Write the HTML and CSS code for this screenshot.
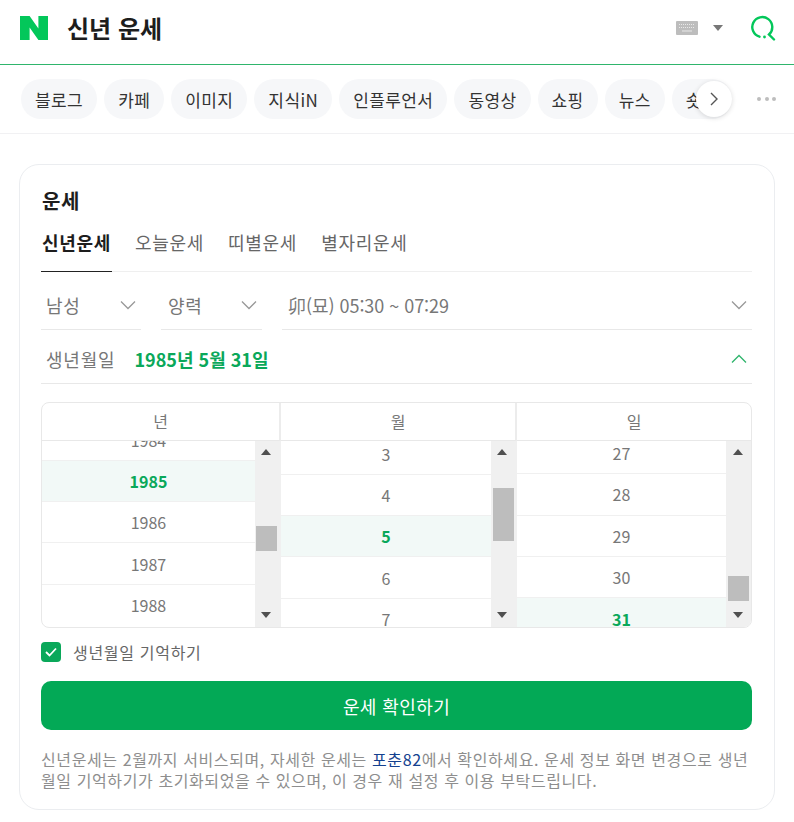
FILE: index.html
```html
<!DOCTYPE html>
<html lang="ko">
<head>
<meta charset="utf-8">
<title>신년 운세</title>
<link rel="stylesheet" href="styles.css">
</head>
<body>
<header class="top">
  <svg class="logo" width="28" height="24" viewBox="0 0 28 24"><path fill="#03c75a" d="M0 0h9.600l8.800 12.600V0H28v24h-9.600L9.600 11.400V24H0z"/></svg>
  <h1 class="title">신년 운세</h1>
  <div class="top-tools">
    <svg class="kbd" width="22" height="14" viewBox="0 0 22 14"><rect width="22" height="14" rx="1" fill="#bdbdbd"/><path stroke="#e8e8e8" stroke-width="1" stroke-dasharray="1 1" d="M3 3.500h16M3 6.500h16"/><path stroke="#e8e8e8" d="M6 10h10"/></svg>
    <span class="caret"></span>
    <svg class="search" width="26" height="26" viewBox="0 0 26 26" fill="none"><path stroke="#03c75a" stroke-width="2.400" stroke-linecap="round" d="M9.500 21.700A10 10 0 1 1 19 19.500L24 24.500"/><circle cx="14.500" cy="22" r="1.400" fill="#03c75a"/></svg>
  </div>
</header>
<nav class="tabs-bar">
  <div class="chips">
    <a class="chip">블로그</a><a class="chip">카페</a><a class="chip">이미지</a><a class="chip">지식iN</a><a class="chip">인플루언서</a><a class="chip">동영상</a><a class="chip">쇼핑</a><a class="chip">뉴스</a><a class="chip">숏폼</a>
  </div>
  <button class="next" aria-label="다음"><svg width="10" height="14" viewBox="0 0 10 14" fill="none"><path stroke="#555" stroke-width="1.400" d="M2 1l6 6-6 6"/></svg></button>
  <div class="more"><i></i><i></i><i></i></div>
</nav>
<main class="card">
  <h2 class="card-title">운세</h2>
  <div class="tabs">
    <a class="tab on">신년운세</a><a class="tab">오늘운세</a><a class="tab">띠별운세</a><a class="tab">별자리운세</a>
  </div>
  <div class="selects">
    <div class="sel sel-a"><span>남성</span><svg class="chev" width="16" height="10" viewBox="0 0 16 10" fill="none"><path d="M1 1.500l7 7 7-7"/></svg></div>
    <div class="sel sel-b"><span>양력</span><svg class="chev" width="16" height="10" viewBox="0 0 16 10" fill="none"><path d="M1 1.500l7 7 7-7"/></svg></div>
    <div class="sel sel-c"><span>卯(묘) 05:30 ~ 07:29</span><svg class="chev" width="16" height="10" viewBox="0 0 16 10" fill="none"><path d="M1 1.500l7 7 7-7"/></svg></div>
  </div>
  <div class="birth">
    <span class="birth-label">생년월일</span>
    <strong class="birth-val">1985년 5월 31일</strong>
    <svg class="chev up" width="16" height="10" viewBox="0 0 16 10" fill="none"><path d="M1 8.500l7-7 7 7"/></svg>
  </div>
  <div class="picker">
    <section class="col col-y">
      <div class="col-head">년</div>
      <div class="col-body">
        <ul class="list">
          <li>1984</li><li class="cur">1985</li><li>1986</li><li>1987</li><li>1988</li>
        </ul>
        <div class="bar"><span class="ar-up"></span><span class="thumb"></span><span class="ar-down"></span></div>
      </div>
    </section>
    <section class="col col-m">
      <div class="col-head">월</div>
      <div class="col-body">
        <ul class="list">
          <li>3</li><li>4</li><li class="cur">5</li><li>6</li><li>7</li>
        </ul>
        <div class="bar"><span class="ar-up"></span><span class="thumb"></span><span class="ar-down"></span></div>
      </div>
    </section>
    <section class="col col-d">
      <div class="col-head">일</div>
      <div class="col-body">
        <ul class="list">
          <li>27</li><li>28</li><li>29</li><li>30</li><li class="cur">31</li>
        </ul>
        <div class="bar"><span class="ar-up"></span><span class="thumb"></span><span class="ar-down"></span></div>
      </div>
    </section>
  </div>
  <label class="remember">
    <span class="check"><svg width="14" height="12" viewBox="0 0 14 12" fill="none"><path stroke="#fff" stroke-width="1.800" d="M2 6l3.500 3.500L12 2.500"/></svg></span>
    생년월일 기억하기
  </label>
  <button class="cta">운세 확인하기</button>
  <p class="note">신년운세는 2월까지 서비스되며, 자세한 운세는 <a class="link">포춘82</a>에서 확인하세요. 운세 정보 화면 변경으로 생년월일 기억하기가 초기화되었을 수 있으며, 이 경우 재 설정 후 이용 부탁드립니다.</p>
</main>
</body>
</html>
```
FILE: styles.css
```css
* { box-sizing: border-box; }
html, body { margin: 0; padding: 0; }
body {
  background: #fff;
  color: #222;
  font-family: "Noto Sans CJK KR", "Noto Sans", sans-serif;
  height: 822px;
  overflow: hidden;
}
h1, h2, p, ul { margin: 0; padding: 0; }
ul { list-style: none; }

.top {
  height: 65px;
  display: flex;
  align-items: center;
  padding: 0 18px 8px 20px;
  border-bottom: 1px solid #2fb56c;
}
.title {
  margin-left: 19px;
  font-size: 24px;
  font-weight: 700;
  line-height: 30px;
  color: #1d1d1d;
}
.top-tools { margin-left: auto; display: flex; align-items: center; }
.caret {
  width: 0; height: 0;
  margin-left: 15px;
  border: 5px solid transparent;
  border-top: 6px solid #777;
  border-bottom: 0;
}
.search { margin-left: 27px; }

.tabs-bar {
  position: relative;
  height: 69px;
  display: flex;
  align-items: center;
  padding-left: 21px;
  border-bottom: 1px solid #f1f1f3;
}
.chips {
  width: 711px;
  display: flex;
  gap: 7px;
  overflow: hidden;
}
.chip {
  flex: none;
  height: 40px;
  padding: 0 14px;
  display: flex;
  align-items: center;
  border-radius: 20px;
  background: #f6f7f9;
  font-size: 17px;
  color: #333;
  letter-spacing: 0.4px;
}
.next {
  position: absolute;
  left: 696px;
  top: 16px;
  width: 36px;
  height: 36px;
  padding: 0;
  border: 0;
  border-radius: 50%;
  background: #fff;
  box-shadow: 0 1px 5px rgba(0, 0, 0, .14);
  display: flex;
  align-items: center;
  justify-content: center;
}
.more {
  position: absolute;
  left: 757px;
  top: 32px;
  display: flex;
  gap: 3.500px;
}
.more i { width: 4px; height: 4px; border-radius: 50%; background: #bdbdbd; }

.card {
  margin: 30px 19px 0;
  width: 756px;
  height: 646px;
  padding: 20px 22px 0 21px;
  border: 1px solid #ebedf0;
  border-radius: 20px;
}
.card-title {
  padding-left: 1px;
  font-size: 20px;
  font-weight: 700;
  line-height: 32px;
  letter-spacing: 0.6px;
  color: #1d1d1d;
}
.tabs {
  margin-top: 10px;
  height: 45px;
  display: flex;
  gap: 22px;
  border-bottom: 1px solid #efefef;
}
.tab {
  height: 45px;
  padding: 0 1px;
  font-size: 18px;
  line-height: 30px;
  color: #666;
  letter-spacing: 0.7px;
}
.tab.on {
  font-weight: 700;
  color: #1d1d1d;
  border-bottom: 1px solid #222;
}
.selects { display: flex; gap: 20px; height: 58px; }
.sel {
  height: 58px;
  display: flex;
  align-items: center;
  justify-content: space-between;
  padding: 9px 5px 0 5px;
  border-bottom: 1px solid #e8e8e8;
  font-size: 18px;
  letter-spacing: 0.7px;
  color: #777;
}
.sel-a { width: 100px; }
.sel-b { width: 101px; padding-left: 7px; }
.sel-c { flex: 1; padding-left: 6px; letter-spacing: -0.05px; }
.chev { flex: none; }
.chev path { stroke: #999; stroke-width: 1.300; }
.chev.up path { stroke: #2fb56c; }
.birth {
  height: 54px;
  display: flex;
  align-items: center;
  padding: 4px 5px 0 5px;
  border-bottom: 1px solid #e8e8e8;
}
.birth-label { font-size: 18px; letter-spacing: 0.8px; color: #777; }
.birth-val {
  margin-left: 19px;
  font-size: 18px;
  font-weight: 700;
  color: #0aa85a;
}
.birth .chev { margin-left: auto; }

.picker {
  margin-top: 18px;
  height: 226px;
  display: flex;
  border: 1px solid #e8e8e8;
  border-radius: 8px;
  overflow: hidden;
}
.col { min-width: 0; display: flex; flex-direction: column; }
.col-y { flex: 239; }
.col-m { flex: 236; }
.col-d { flex: 234; }
.col-head {
  flex: none;
  height: 38px;
  display: flex;
  align-items: center;
  justify-content: center;
  padding-bottom: 2px;
  border-bottom: 1px solid #e8e8e8;
  border-right: 2px solid #ececec;
  font-size: 16px;
  color: #777;
}
.col-d .col-head { border-right: 0; }
.col-body { flex: 1; min-height: 0; display: flex; }
.list { flex: 1; min-width: 0; overflow: hidden; }
.list li {
  height: 41.250px;
  display: flex;
  align-items: center;
  justify-content: center;
  border-bottom: 1px solid #f0f0f0;
  font-size: 16px;
  color: #777;
}
.list li:last-child { border-bottom: 0; }
.list li.cur {
  background: #f2f9f7;
  color: #0aa85a;
  font-weight: 700;
}
.col-y .list li:first-child { margin-top: -21.300px; }
.col-m .list li:first-child { margin-top: -7.300px; }
.col-d .list li:first-child { margin-top: -8px; }
.bar {
  flex: none;
  position: relative;
  width: 26px;
  background: #f0f0f0;
}
.col-d .bar { width: 25px; }
.thumb { position: absolute; left: 1px; width: 21px; background: #bdbdbd; }
.col-y .thumb { top: 85px; height: 25px; }
.col-m .thumb { top: 47px; height: 53px; left: 2px; }
.col-d .thumb { top: 135px; height: 25px; left: 2px; }
.ar-up, .ar-down {
  position: absolute;
  left: 6px;
  width: 0; height: 0;
  border-left: 5.500px solid transparent;
  border-right: 5.500px solid transparent;
}
.col-d .ar-up, .col-d .ar-down { left: 7px; }
.ar-up { top: 8px; border-bottom: 6px solid #505050; }
.ar-down { bottom: 9px; border-top: 6px solid #505050; }

.remember {
  margin-top: 14px;
  height: 20px;
  display: flex;
  align-items: center;
  gap: 12px;
  font-size: 16px;
  letter-spacing: 0.7px;
  color: #666;
}
.check {
  width: 20px;
  height: 20px;
  border-radius: 4px;
  background: #0aa85a;
  display: flex;
  align-items: center;
  justify-content: center;
}
.cta {
  display: block;
  width: 100%;
  height: 49px;
  margin-top: 19px;
  padding: 0;
  border: 0;
  border-radius: 10px;
  background: #03a956;
  color: #fff;
  font-family: inherit;
  font-size: 18px;
  letter-spacing: 0.4px;
}
.note {
  margin-top: 19px;
  font-size: 16px;
  line-height: 21px;
  color: #8e8e8e;
  letter-spacing: 0.6px;
}
.link { color: #14418f; }
```
